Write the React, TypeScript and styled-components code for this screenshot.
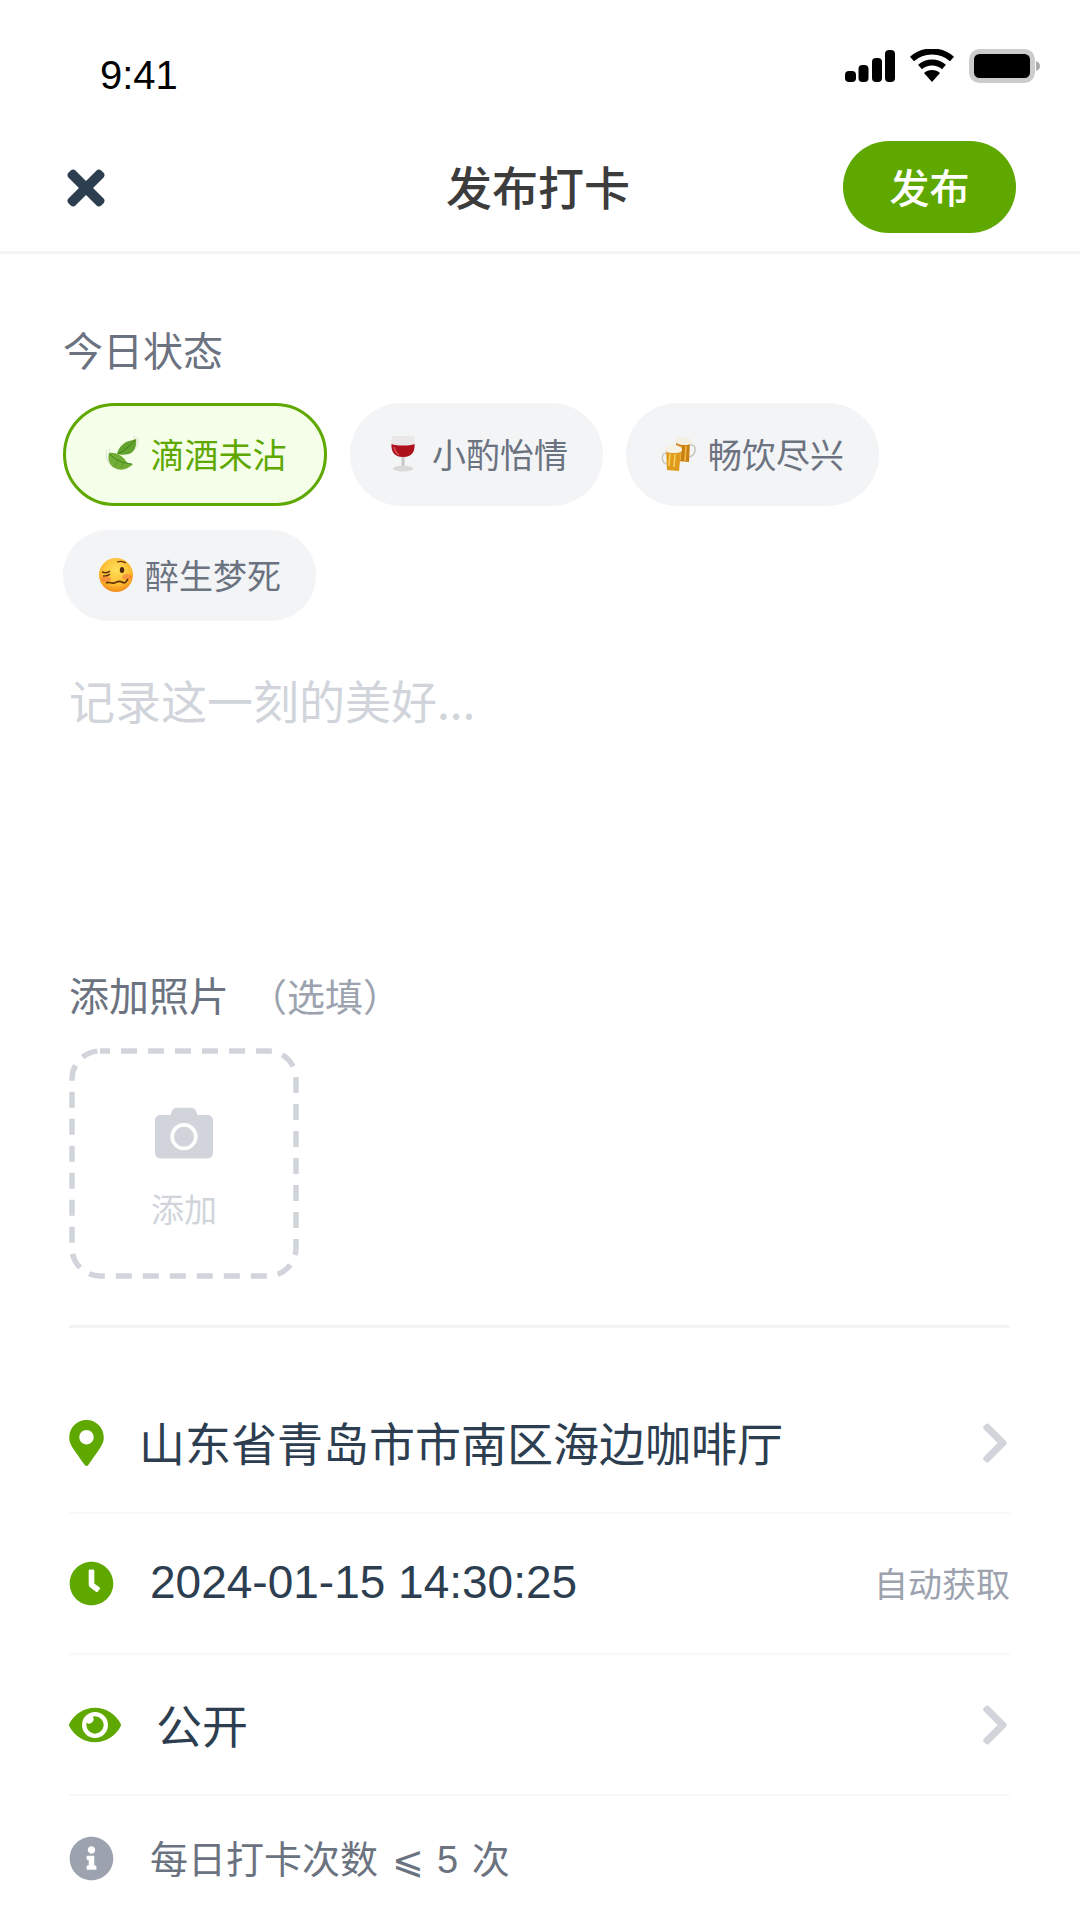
import { createGlobalStyle, styled } from "styled-components";
import { FaCamera, FaChevronRight, FaClock, FaEye, FaInfoCircle, FaMapMarkerAlt, FaTimes } from "react-icons/fa";

const GlobalStyle = createGlobalStyle`
  html, body {
    margin: 0;
    background: #fff;
  }
  * {
    box-sizing: border-box;
  }
  body {
    font-family: "Liberation Sans", "Noto Sans CJK SC", sans-serif;
  }
`;

const LeafEmoji = () => (
  <svg viewBox="0 0 36 36" width="36" height="36">
    <path d="M3 14c-2 6 0 12 4 15M6 13c-1 4 0 7 1 9M33 1c2 4 1 9-2 12M30 0c1 2 1 4 0 6" stroke="#d5d9d5" strokeWidth="0.9" fill="none" />
    <path d="M5 17c6-1 13 2 17 8 2 3 5 3 7 3-4 4-10 7-16 5C6 31 3 24 5 17z" fill="#71ad35" />
    <path d="M6 18c4 5 11 9 22 10" stroke="#3f7d1c" strokeWidth="0.9" fill="none" />
    <path d="M11 30c2-3 3-6 3-7M17 32c1-2 2-3 2-5" stroke="#4c8c22" strokeWidth="0.6" fill="none" />
    <path d="M32 3c1 6-1 13-7 15-4 1-9 1-12 0 1-5 4-9 9-12 3-1 7-2 10-3z" fill="#62a32e" />
    <path d="M14 18c6-3 12-8 17-14" stroke="#3c7a1a" strokeWidth="0.9" fill="none" />
  </svg>
);

const WineEmoji = () => (
  <svg viewBox="0 0 36 36" width="36" height="36">
    <path d="M7 0h22c2 9 1 21-11 22C6 21 5 9 7 0z" fill="#e9e7e8" />
    <path d="M6.500 8c5 2 18 2 23 0 .5 7-2 13-11.500 13C9 21 6 15 6.500 8z" fill="#ad101b" />
    <path d="M9 11c1 4 2 6 5 8" stroke="#d9505a" strokeWidth="1.500" fill="none" />
    <rect x="16.500" y="21" width="3" height="10" fill="#c6c6c6" />
    <ellipse cx="18" cy="32.500" rx="10" ry="3" fill="#d9d9d9" />
  </svg>
);

const BeerEmoji = () => (
  <svg viewBox="0 0 36 36" width="36" height="36">
    <path d="M28 9c5-1 7 2 6 6s-3 6-7 6" stroke="#c9c9c0" strokeWidth="1.600" fill="none" />
    <path d="M15 5l14 1-1 20-12-1z" fill="#c97f12" />
    <path d="M20 10l-1 14M25 10l-1 15" stroke="#f0bb45" strokeWidth="1.600" />
    <path d="M14 4c2-4 15-4 17 1 0 4-4 4-8 4s-9-1-9-5z" fill="#f4efe2" />
    <path d="M5 17c-5 1-5 10 1 11" stroke="#c9c9c0" strokeWidth="1.600" fill="none" />
    <path d="M5 12l15 2-2 21-12-1z" fill="#e09a1c" />
    <path d="M9 18l-1 12M14 18l-1 13" stroke="#f7cf5e" strokeWidth="1.600" />
    <path d="M4 12c2-5 15-4 17 1 0 4-4 4-9 4s-8-1-8-5z" fill="#f6f1e5" />
  </svg>
);

const WoozyEmoji = () => (
  <svg viewBox="0 0 36 36" width="36" height="36">
    <defs>
      <radialGradient id="woozy" cx="50%" cy="35%" r="68%">
        <stop offset="0%" stopColor="#ffe05c" />
        <stop offset="65%" stopColor="#fdbb2f" />
        <stop offset="100%" stopColor="#f08518" />
      </radialGradient>
    </defs>
    <circle cx="18" cy="18" r="17" fill="url(#woozy)" />
    <ellipse cx="8" cy="22" rx="5" ry="3" fill="#f4703f" opacity="0.55" />
    <ellipse cx="29" cy="20" rx="5" ry="3" fill="#f4703f" opacity="0.55" />
    <path d="M4 15c3 1 6 1 8-1M5 19c3 0 5 0 7-2" stroke="#5f300c" strokeWidth="1.400" fill="none" />
    <ellipse cx="24" cy="13" rx="2.200" ry="3" fill="#4f2a0c" />
    <path d="M19 5c3-1 6-1 9 1" stroke="#5f300c" strokeWidth="1.300" fill="none" />
    <path d="M8 26c3-2 5 1 8 0s5-3 8-1 4 0 6-3" stroke="#5f300c" strokeWidth="1.700" fill="none" />
  </svg>
);

const moods = [
  { label: "滴酒未沾", icon: <LeafEmoji />, active: true },
  { label: "小酌怡情", icon: <WineEmoji />, active: false },
  { label: "畅饮尽兴", icon: <BeerEmoji />, active: false },
  { label: "醉生梦死", icon: <WoozyEmoji />, active: false },
];

const App = () => {
  return (
    <Page>
      <GlobalStyle />
      <StatusBar>
        <Clock>9:41</Clock>
        <StatusIcons>
          <svg width="50" height="32" viewBox="0 0 50 32">
            <rect x="0" y="21" width="11" height="11" rx="4" fill="#000" />
            <rect x="13.500" y="15" width="10" height="17" rx="4" fill="#000" />
            <rect x="27" y="8" width="10" height="24" rx="4" fill="#000" />
            <rect x="40" y="0" width="10" height="32" rx="4" fill="#000" />
          </svg>
          <svg width="46" height="34" viewBox="0 0 46 34">
            <path d="M3 10c11-10 29-10 40 0" stroke="#000" strokeWidth="6" fill="none" />
            <path d="M11 18c7-6 17-6 24 0" stroke="#000" strokeWidth="6" fill="none" />
            <path d="M15 24c4-4 12-4 16 0l-8 9z" fill="#000" />
          </svg>
          <svg width="71" height="34" viewBox="0 0 71 34">
            <rect x="2.500" y="2.500" width="61" height="29" rx="8" fill="#000" stroke="#cccccc" strokeWidth="5" />
            <path d="M67 12c3 1 4 3 4 5s-1 4-4 5z" fill="#aaaaaa" />
          </svg>
        </StatusIcons>
      </StatusBar>

      <Header>
        <CloseButton>
          <FaTimes size={54} />
        </CloseButton>
        <Title>发布打卡</Title>
        <PublishButton>发布</PublishButton>
      </Header>

      <MoodSection>
        <SectionLabel>今日状态</SectionLabel>
        <MoodList>
          {moods.map((mood) => (
            <MoodChip key={mood.label} $active={mood.active}>
              {mood.icon}
              <span>{mood.label}</span>
            </MoodChip>
          ))}
        </MoodList>
      </MoodSection>

      <Body>
        <Placeholder>记录这一刻的美好...</Placeholder>

        <PhotoLabel>
          添加照片<em>（选填）</em>
        </PhotoLabel>
        <AddPhoto>
          <svg viewBox="0 0 230 231" width="230" height="231">
            <rect x="3" y="3" width="224" height="225" rx="28" fill="none" stroke="#d1d5db" strokeWidth="5.500" strokeDasharray="16 11" strokeDashoffset="6" />
          </svg>
          <FaCamera size={58} />
          <span>添加</span>
        </AddPhoto>

        <Divider />

        <InfoRow>
          <RowIcon $width={70}>
            <Pin />
          </RowIcon>
          <RowText>山东省青岛市市南区海边咖啡厅</RowText>
          <Chevron />
        </InfoRow>
        <InfoRow>
          <RowIcon $width={81}>
            <FaClock size={45} />
          </RowIcon>
          <RowText>2024-01-15 14:30:25</RowText>
          <RowHint>自动获取</RowHint>
        </InfoRow>
        <InfoRow>
          <RowIcon $width={87}>
            <FaEye size={52} />
          </RowIcon>
          <RowText>公开</RowText>
          <Chevron />
        </InfoRow>
        <NoteRow>
          <RowIcon $width={81} $muted>
            <FaInfoCircle size={45} />
          </RowIcon>
          <NoteText>每日打卡次数 ⩽ 5 次</NoteText>
        </NoteRow>
      </Body>
    </Page>
  );
};

const Chevron = styled(FaChevronRight)`
  width: 30px;
  height: 46px;
  color: #d1d5db;
`;

const Pin = styled(FaMapMarkerAlt)`
  width: 35px;
  height: 46px;
`;

const Page = styled.div`
  width: 1080px;
  height: 1920px;
  overflow: hidden;
  background: #fff;
`;

const StatusBar = styled.div`
  height: 120px;
  padding: 50px 40px 0 100px;
  display: flex;
  justify-content: space-between;
  align-items: flex-start;
`;

const Clock = styled.div`
  font-size: 40px;
  line-height: 50px;
  color: #000;
`;

const StatusIcons = styled.div`
  margin-top: -1px;
  display: flex;
  align-items: center;
  gap: 14px;
`;

const Header = styled.header`
  height: 134px;
  padding: 21px 64px 0 65px;
  display: grid;
  grid-template-columns: 1fr auto 1fr;
  align-items: start;
  border-bottom: 3px solid #f3f4f6;
`;

const CloseButton = styled.button`
  margin-top: 25px;
  padding: 0;
  width: 42px;
  height: 44px;
  display: flex;
  align-items: center;
  justify-content: center;
  border: 0;
  background: none;
  color: #2c3e50;
`;

const Title = styled.h1`
  margin: 0 5px 0 0;
  font-size: 46px;
  line-height: 88px;
  font-weight: 500;
  color: #3c3c3c;
  font-family: "Noto Sans CJK SC", sans-serif;
`;

const PublishButton = styled.button`
  justify-self: end;
  width: 173px;
  height: 92px;
  padding: 0 0 3px;
  border: 0;
  border-radius: 46px;
  background: #5fa800;
  color: #fff;
  font-family: "Noto Sans CJK SC", sans-serif;
  font-size: 40px;
  font-weight: 500;
`;

const MoodSection = styled.section`
  padding: 67px 63px 0;
`;

const SectionLabel = styled.div`
  font-family: "Noto Sans CJK SC", sans-serif;
  font-size: 40px;
  line-height: 56px;
  color: #6b7280;
  margin-bottom: 26px;
`;

const MoodList = styled.div`
  display: flex;
  flex-wrap: wrap;
  gap: 24px 23px;
`;

const MoodChip = styled.button<{ $active: boolean }>`
  min-height: ${(p) => (p.$active ? 103 : 91)}px;
  padding: 0 ${(p) => (p.$active ? 37.5 : 35)}px 2px;
  display: flex;
  align-items: center;
  gap: 11px;
  border-radius: 52px;
  border: ${(p) => (p.$active ? "3px solid #5fa800" : "0")};
  background: ${(p) => (p.$active ? "#f5fee9" : "#f3f4f6")};
  color: ${(p) => (p.$active ? "#5fa800" : "#6b7280")};
  font-family: "Noto Sans CJK SC", sans-serif;
  font-size: 34px;
`;

const Body = styled.main`
  padding: 0 70px 0 69px;
`;

const Placeholder = styled.div`
  margin-top: 46px;
  height: 299px;
  font-family: "Noto Sans CJK SC", sans-serif;
  font-size: 46px;
  line-height: 64px;
  color: #d1d5db;
`;

const PhotoLabel = styled.div`
  font-family: "Noto Sans CJK SC", sans-serif;
  font-size: 40px;
  line-height: 56px;
  color: #6b7280;
  margin-bottom: 25px;
  & em {
    margin-left: 20px;
    font-style: normal;
    font-size: 38px;
    color: #9ca3af;
  }
`;

const AddPhoto = styled.div`
  position: relative;
  width: 230px;
  height: 231px;
  padding-top: 7px;
  display: flex;
  flex-direction: column;
  align-items: center;
  justify-content: center;
  gap: 23px;
  color: #d1d5db;
  font-family: "Noto Sans CJK SC", sans-serif;
  font-size: 33px;
  & > svg:first-child {
    position: absolute;
    inset: 0;
  }
  & span {
    line-height: 46px;
  }
`;

const Divider = styled.div`
  height: 3px;
  margin-top: 46px;
  margin-bottom: 45px;
  background: #f3f4f6;
`;

const InfoRow = styled.div`
  height: 141px;
  display: flex;
  align-items: center;
  border-bottom: 2px solid #f7f8f9;
`;

const NoteRow = styled.div`
  height: 124px;
  display: flex;
  align-items: center;
`;

const RowIcon = styled.div<{ $width: number; $muted?: boolean }>`
  flex: none;
  width: ${(p) => p.$width}px;
  display: flex;
  align-items: center;
  color: ${(p) => (p.$muted ? "#9ca3af" : "#5fa800")};
`;

const RowText = styled.div`
  flex: 1;
  padding-bottom: 4px;
  font-size: 46px;
  color: #2c3e50;
`;

const RowHint = styled.div`
  padding-bottom: 3px;
  font-family: "Noto Sans CJK SC", sans-serif;
  font-size: 34px;
  color: #9ca3af;
`;

const NoteText = styled.div`
  padding-bottom: 3px;
  font-size: 38px;
  word-spacing: 3px;
  color: #6b7280;
`;

export default App;
